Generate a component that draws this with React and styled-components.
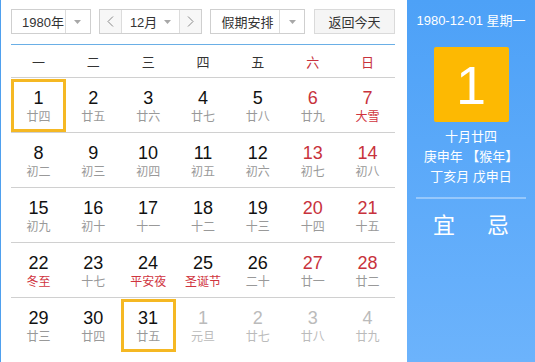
import React from "react";
import styled, { createGlobalStyle } from "styled-components";

const GlobalStyle = createGlobalStyle`
  html, body {
    margin: 0;
    padding: 0;
    background: #fff;
  }
  body {
    font-family: "Liberation Sans", "Noto Sans CJK SC", Arial, sans-serif;
    color: #333;
  }
`;

const weekdays = [
  { label: "一" },
  { label: "二" },
  { label: "三" },
  { label: "四" },
  { label: "五" },
  { label: "六", weekend: true },
  { label: "日", weekend: true },
];

const weeks = [
  [
    { day: 1, lunar: "廿四", selected: true },
    { day: 2, lunar: "廿五" },
    { day: 3, lunar: "廿六" },
    { day: 4, lunar: "廿七" },
    { day: 5, lunar: "廿八" },
    { day: 6, lunar: "廿九", weekend: true },
    { day: 7, lunar: "大雪", weekend: true, festival: true },
  ],
  [
    { day: 8, lunar: "初二" },
    { day: 9, lunar: "初三" },
    { day: 10, lunar: "初四" },
    { day: 11, lunar: "初五" },
    { day: 12, lunar: "初六" },
    { day: 13, lunar: "初七", weekend: true },
    { day: 14, lunar: "初八", weekend: true },
  ],
  [
    { day: 15, lunar: "初九" },
    { day: 16, lunar: "初十" },
    { day: 17, lunar: "十一" },
    { day: 18, lunar: "十二" },
    { day: 19, lunar: "十三" },
    { day: 20, lunar: "十四", weekend: true },
    { day: 21, lunar: "十五", weekend: true },
  ],
  [
    { day: 22, lunar: "冬至", festival: true },
    { day: 23, lunar: "十七" },
    { day: 24, lunar: "平安夜", festival: true },
    { day: 25, lunar: "圣诞节", festival: true },
    { day: 26, lunar: "二十" },
    { day: 27, lunar: "廿一", weekend: true },
    { day: 28, lunar: "廿二", weekend: true },
  ],
  [
    { day: 29, lunar: "廿三" },
    { day: 30, lunar: "廿四" },
    { day: 31, lunar: "廿五", selected: true },
    { day: 1, lunar: "元旦", other: true },
    { day: 2, lunar: "廿七", other: true },
    { day: 3, lunar: "廿八", other: true },
    { day: 4, lunar: "廿九", other: true },
  ],
];

const Caret = () => (
  <svg width="7" height="4" viewBox="0 0 7 4">
    <path d="M0 0 L7 0 L3.5 4 Z" fill="#a8a8a8" />
  </svg>
);

const Chevron = ({ dir }) => (
  <svg width="7" height="11" viewBox="0 0 7 11">
    <path
      d={dir === "left" ? "M6 0.5 L1 5.5 L6 10.5" : "M1 0.5 L6 5.5 L1 10.5"}
      fill="none"
      stroke="#888"
      strokeWidth="1"
    />
  </svg>
);

const App = () => {
  return (
    <>
      <GlobalStyle />
      <Wrapper>
        <Main>
          <Toolbar>
            <Select $width={80}>
              <SelectText>1980年</SelectText>
              <SelectArrow>
                <Caret />
              </SelectArrow>
            </Select>
            <MonthGroup>
              <NavBtn>
                <Chevron dir="left" />
              </NavBtn>
              <MonthSelect>
                12月
                <Caret />
              </MonthSelect>
              <NavBtn>
                <Chevron dir="right" />
              </NavBtn>
            </MonthGroup>
            <Select $width={95}>
              <SelectText>假期安排</SelectText>
              <SelectArrow>
                <Caret />
              </SelectArrow>
            </Select>
            <TodayBtn>返回今天</TodayBtn>
          </Toolbar>

          <WeekHeader>
            {weekdays.map((w) => (
              <WeekDay key={w.label} $red={w.weekend}>
                {w.label}
              </WeekDay>
            ))}
          </WeekHeader>

          {weeks.map((week, i) => (
            <WeekRow key={i} $last={i === weeks.length - 1}>
              {week.map((d, j) => (
                <Cell key={j} $selected={d.selected}>
                  <DayNum $red={d.weekend} $other={d.other}>
                    {d.day}
                  </DayNum>
                  <Lunar $red={d.festival} $other={d.other}>
                    {d.lunar}
                  </Lunar>
                </Cell>
              ))}
            </WeekRow>
          ))}
        </Main>

        <Side>
          <SideDate>1980-12-01 星期一</SideDate>
          <BigDay>1</BigDay>
          <LunarInfo>
            <div>十月廿四</div>
            <div>庚申年 【猴年】</div>
            <div>丁亥月 戊申日</div>
          </LunarInfo>
          <Divider />
          <YiJi>
            <span>宜</span>
            <span>忌</span>
          </YiJi>
        </Side>
      </Wrapper>
    </>
  );
};

const Wrapper = styled.div`
  display: flex;
  width: 535px;
  height: 362px;
  overflow: hidden;
  border-left: 1px solid #4fa0ee;
  box-sizing: border-box;
`;

const Main = styled.div`
  width: 406px;
  padding: 9px 12px 0 10px;
  box-sizing: border-box;
`;

const Toolbar = styled.div`
  display: flex;
  gap: 8px;
  height: 25px;
  padding-bottom: 10px;
  border-bottom: 1px solid #6aafe6;
  font-size: 13px;
`;

const Select = styled.div`
  display: flex;
  width: ${(p) => p.$width}px;
  height: 25px;
  border: 1px solid #cfcfcf;
  box-sizing: border-box;
  background: #fff;
`;

const SelectText = styled.div`
  flex: 1;
  display: flex;
  align-items: center;
  padding-left: 10px;
  white-space: nowrap;
  border-right: 1px solid #dcdcdc;
  color: #333;
`;

const SelectArrow = styled.div`
  width: 24px;
  flex-shrink: 0;
  display: flex;
  align-items: center;
  justify-content: center;
`;

const MonthGroup = styled.div`
  display: flex;
  width: 104px;
  height: 25px;
  border: 1px solid #cfcfcf;
  box-sizing: border-box;
`;

const NavBtn = styled.div`
  width: 21px;
  display: flex;
  align-items: center;
  justify-content: center;
  background: #f7f7f7;
`;

const MonthSelect = styled.div`
  flex: 1;
  display: flex;
  align-items: center;
  justify-content: center;
  gap: 7px;
  border-left: 1px solid #dcdcdc;
  border-right: 1px solid #dcdcdc;
  background: #fff;
  color: #333;
`;

const TodayBtn = styled.div`
  width: 81px;
  height: 25px;
  margin-left: 1px;
  border: 1px solid #dadada;
  box-sizing: border-box;
  background: #f5f5f5;
  display: flex;
  align-items: center;
  justify-content: center;
  color: #333;
`;

const WeekHeader = styled.div`
  display: grid;
  grid-template-columns: repeat(7, 1fr);
  height: 32px;
  border-bottom: 1px solid #d0d0d0;
`;

const WeekDay = styled.div`
  display: flex;
  align-items: center;
  justify-content: center;
  font-size: 13px;
  color: ${(p) => (p.$red ? "#c8323c" : "#333")};
`;

const WeekRow = styled.div`
  display: grid;
  grid-template-columns: repeat(7, 1fr);
  height: 55px;
  box-sizing: border-box;
  border-bottom: ${(p) => (p.$last ? "none" : "1px solid #d0d0d0")};
`;

const Cell = styled.div`
  display: flex;
  flex-direction: column;
  align-items: center;
  box-sizing: border-box;
  margin-top: ${(p) => (p.$selected ? 1 : 0)}px;
  height: ${(p) => (p.$selected ? 53 : 54)}px;
  padding-top: ${(p) => (p.$selected ? 5 : 9)}px;
  border: ${(p) => (p.$selected ? "3px solid #f5b823" : "none")};
`;

const DayNum = styled.div`
  font-size: 18px;
  line-height: 22px;
  color: ${(p) => (p.$other ? "#bbb" : p.$red ? "#c8323c" : "#111")};
`;

const Lunar = styled.div`
  font-size: 12px;
  line-height: 16px;
  color: ${(p) => (p.$other ? "#bbb" : p.$red ? "#d0343e" : "#999")};
`;

const Side = styled.div`
  flex: 1;
  background: linear-gradient(to bottom, #4da1f7, #6cb3fc);
  display: flex;
  flex-direction: column;
  align-items: center;
  color: #fff;
  padding-top: 13px;
  box-sizing: border-box;
`;

const SideDate = styled.div`
  font-size: 13px;
  line-height: 16px;
`;

const BigDay = styled.div`
  margin-top: 18px;
  width: 75px;
  height: 75px;
  border-radius: 2px;
  background: #fdb902;
  display: flex;
  align-items: center;
  justify-content: center;
  font-size: 54px;
  line-height: 1;
`;

const LunarInfo = styled.div`
  margin-top: 5px;
  font-size: 13px;
  line-height: 20px;
  text-align: center;
`;

const Divider = styled.div`
  margin-top: 10px;
  width: 110px;
  height: 2px;
  background: rgba(255, 255, 255, 0.35);
`;

const YiJi = styled.div`
  margin-top: 12px;
  display: flex;
  gap: 32px;
  font-size: 22px;
  line-height: 30px;
`;

export default App;
